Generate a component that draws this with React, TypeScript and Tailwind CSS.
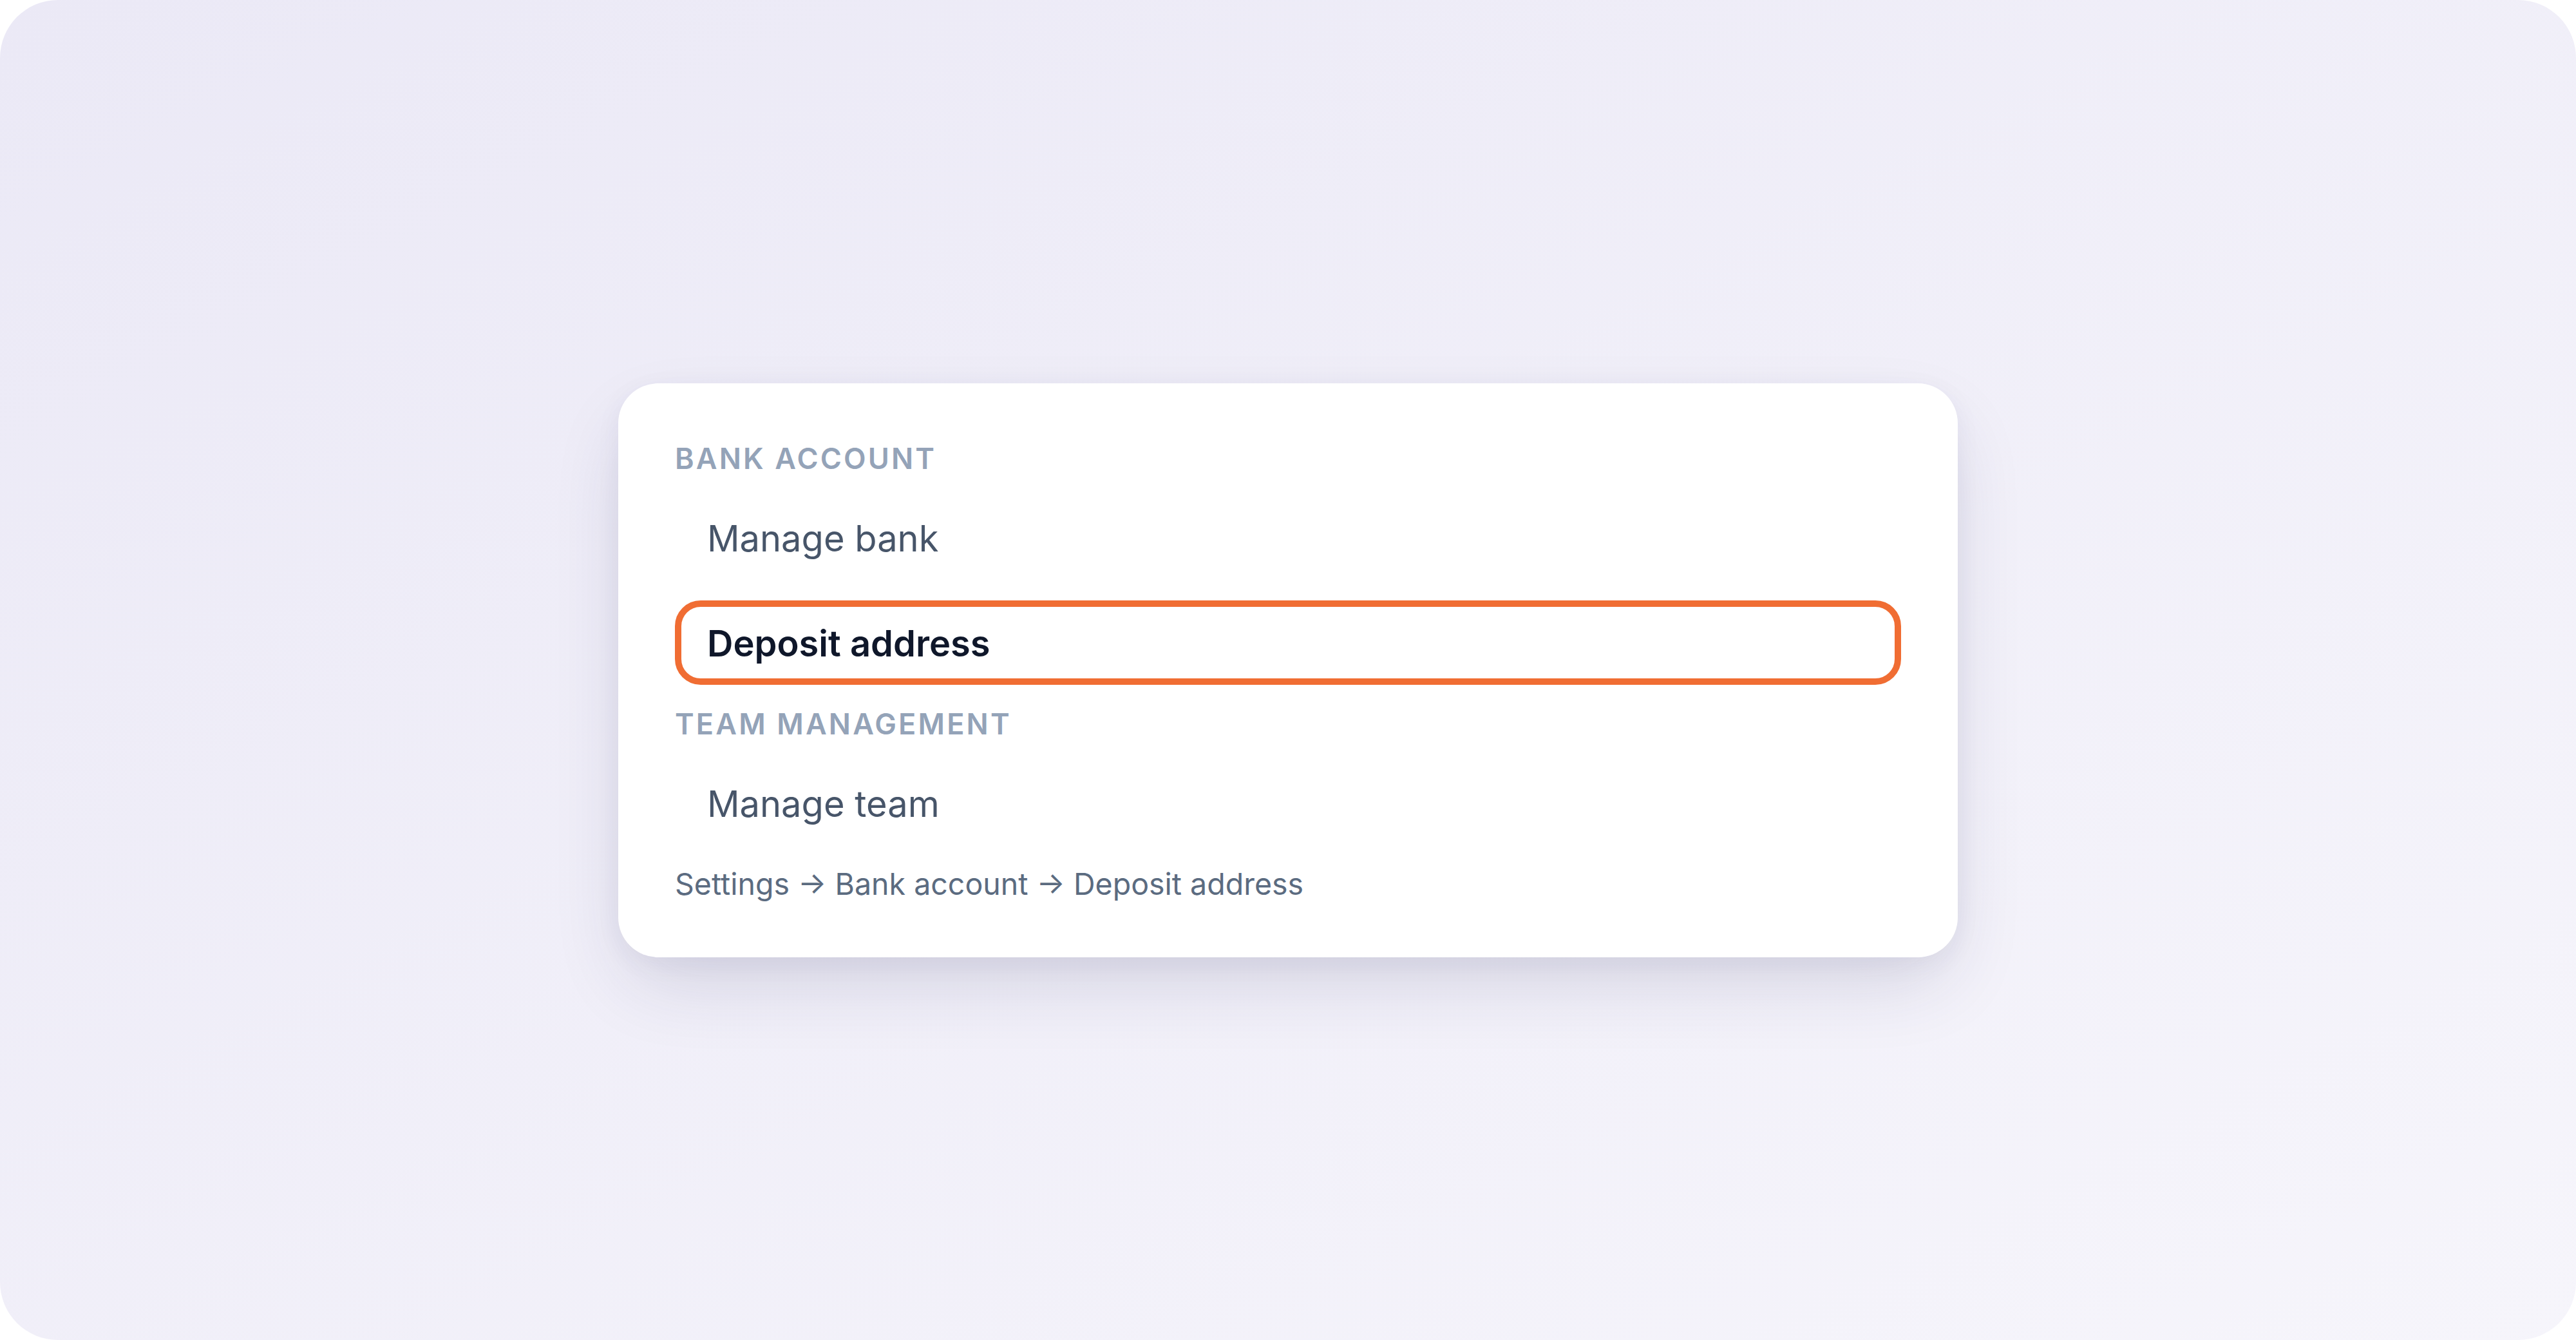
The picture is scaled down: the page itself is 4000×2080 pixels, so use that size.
import React from "react";

function Item({ label, active }: { label: string; active?: boolean }) {
  return (
    <div
      className={
        "flex h-[131px] items-center rounded-[40px] border-[10px] px-[40px] pt-[4px] " +
        (active
          ? "border-[#f06d33] font-semibold text-[#0f172a]"
          : "border-transparent font-normal text-[#475569]")
      }
    >
      <span className="text-[56px] leading-none">{label}</span>
    </div>
  );
}

function Label({ children }: { children: React.ReactNode }) {
  return (
    <div className="flex h-[54px] items-center pt-[3px] text-[45px] font-semibold uppercase leading-none tracking-[0.07em] text-[#94a3b8]">
      {children}
    </div>
  );
}

export default function App() {
  return (
    <div className="h-[2080px] w-[4000px] bg-white" style={{ fontFamily: "Inter, 'Noto Sans', sans-serif" }}>
      <div className="flex h-full w-full items-center justify-center rounded-[90px] bg-gradient-to-br from-[#ebe9f6] to-[#f6f5fb]">
        <div className="flex w-[2080px] flex-col gap-[32px] rounded-[62px] bg-white p-[88px] shadow-[0_50px_120px_-20px_rgba(40,40,90,0.16),0_10px_40px_rgba(40,40,90,0.05)]">
          <Label>Bank account</Label>
          <Item label="Manage bank" />
          <Item label="Deposit address" active />
          <Label>Team management</Label>
          <Item label="Manage team" />
          <div className="flex h-[54px] items-center pt-[3px] text-[46.5px] font-normal leading-none text-[#5b6b80]">
            Settings → Bank account → Deposit address
          </div>
        </div>
      </div>
    </div>
  );
}
